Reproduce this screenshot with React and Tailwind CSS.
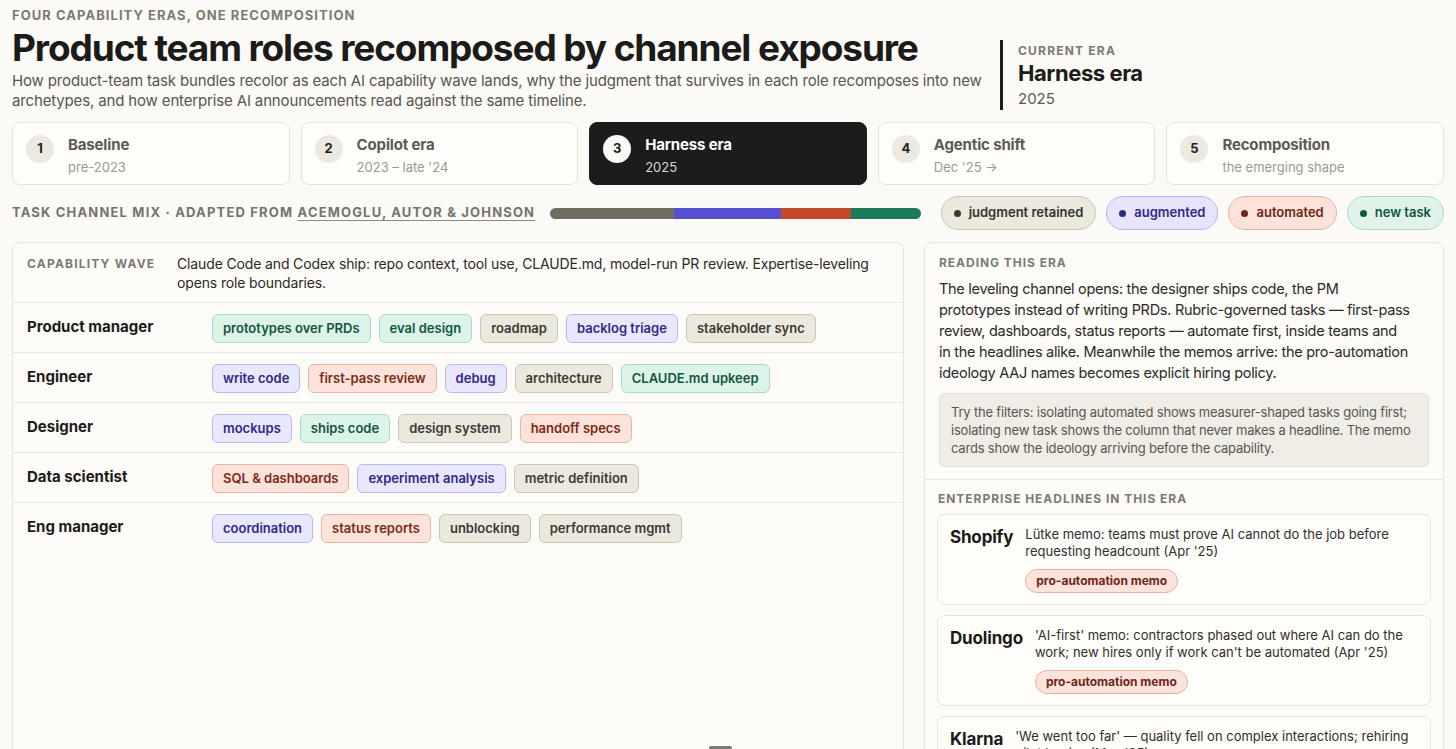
import React from "react";

const CHIP = {
  n: "bg-[#dcf3e9] border-[#a9dcc4] text-[#14563b]",
  a: "bg-[#e9e7fc] border-[#bab6f0] text-[#2d2a86]",
  x: "bg-[#fbe3db] border-[#ebb4a5] text-[#7a2a18]",
  r: "bg-[#ebe8de] border-[#cac6ba] text-[#3b3a35]",
};

const ROLES = [
  ["Product manager", [["prototypes over PRDs", "n"], ["eval design", "n"], ["roadmap", "r"], ["backlog triage", "a"], ["stakeholder sync", "r"]]],
  ["Engineer", [["write code", "a"], ["first-pass review", "x"], ["debug", "a"], ["architecture", "r"], ["CLAUDE.md upkeep", "n"]]],
  ["Designer", [["mockups", "a"], ["ships code", "n"], ["design system", "r"], ["handoff specs", "x"]]],
  ["Data scientist", [["SQL & dashboards", "x"], ["experiment analysis", "a"], ["metric definition", "r"]]],
  ["Eng manager", [["coordination", "a"], ["status reports", "x"], ["unblocking", "r"], ["performance mgmt", "r"]]],
];

const ERAS = [
  ["1", "Baseline", "pre-2023", false],
  ["2", "Copilot era", "2023 – late '24", false],
  ["3", "Harness era", "2025", true],
  ["4", "Agentic shift", "Dec '25 →", false],
  ["5", "Recomposition", "the emerging shape", false],
];

const LEGEND = [
  ["judgment retained", "bg-[#ebe8de] border-[#c9c5b9] text-[#33322d]", "bg-[#3a3934]"],
  ["augmented", "bg-[#e7e5fb] border-[#b9b5ef] text-[#2d2a86]", "bg-[#2d2a86]"],
  ["automated", "bg-[#fbe3dc] border-[#eab2a3] text-[#6e2616]", "bg-[#6e2616]"],
  ["new task", "bg-[#dff3ea] border-[#aadcc5] text-[#10573a]", "bg-[#10573a]"],
];

const HEADLINES = [
  ["Shopify", "Lütke memo: teams must prove AI cannot do the job before requesting headcount (Apr '25)", true],
  ["Duolingo", "'AI-first' memo: contractors phased out where AI can do the work; new hires only if work can't be automated (Apr '25)", true],
  ["Klarna", "'We went too far' — quality fell on complex interactions; rehiring pilot begins (May '25)", false],
];

export default function App() {
  return (
    <div
      className="min-h-screen bg-[#fcfaf6] text-[#1b1b1a] px-3 pt-[7px] overflow-hidden"
      style={{ fontFamily: "Inter, 'Noto Sans', 'Liberation Sans', sans-serif", height: 749 }}
    >
      {/* Header */}
      <div className="flex">
        <div className="w-[975px] shrink-0">
          <div className="text-[13px] leading-[16px] font-bold tracking-[0.08em] text-[#7b7b74]">
            FOUR CAPABILITY ERAS, ONE RECOMPOSITION
          </div>
          <h1 className="mt-[3px] whitespace-nowrap text-[37px] leading-[44px] font-bold tracking-[-0.03em] text-[#1b1b1a]">
            Product team roles recomposed by channel exposure
          </h1>
          <p className="mt-[1px] text-[15px] leading-[20px] text-[#56564f] w-[982px] tracking-[-0.01em]">
            How product-team task bundles recolor as each AI capability wave lands, why the judgment that survives in each role recomposes into new archetypes, and how enterprise AI announcements read against the same timeline.
          </p>
        </div>
        <div className="ml-[13px] mt-[33px] self-start border-l-[3px] border-[#1b1b1a] pl-[15px] pt-[3px] h-[70px]">
          <div className="text-[12px] leading-[16px] font-bold tracking-[0.1em] text-[#7b7b74]">CURRENT ERA</div>
          <div className="text-[22px] leading-[28px] font-bold tracking-[-0.02em]">Harness era</div>
          <div className="mt-[2px] text-[15px] leading-[20px] text-[#5b5b55]">2025</div>
        </div>
      </div>

      {/* Era tabs */}
      <div className="mt-[11px] grid grid-cols-5 gap-[11px]">
        {ERAS.map(([n, t, s, active]) => (
          <div
            key={n}
            className={
              "h-[63px] rounded-[8px] border flex items-start gap-[14px] pl-[13px] pt-[12px] " +
              (active ? "bg-[#1b1c1b] border-[#1b1c1b]" : "bg-[#fefdfa] border-[#e6e3db]")
            }
          >
            <div
              className={
                "w-[28px] h-[28px] rounded-full flex items-center justify-center text-[13px] font-bold " +
                (active ? "bg-[#fbf9f4] text-[#1b1b1a]" : "bg-[#ece9e1] text-[#222]")
              }
            >
              {n}
            </div>
            <div>
              <div className={"text-[15px] leading-[20px] font-bold tracking-[-0.01em] " + (active ? "text-white" : "text-[#5b5b56]")}>{t}</div>
              <div className={"mt-[3px] text-[13px] leading-[18px] " + (active ? "text-[#d6d6d2]" : "text-[#9b9a93]")}>{s}</div>
            </div>
          </div>
        ))}
      </div>

      {/* Channel mix */}
      <div className="mt-[11px] flex items-center h-[34px]">
        <div className="text-[13px] font-bold tracking-[0.09em] text-[#74746d] whitespace-nowrap">
          TASK CHANNEL MIX · ADAPTED FROM{" "}
          <span className="underline decoration-[#8a8a84] underline-offset-[3px]">ACEMOGLU, AUTOR &amp; JOHNSON</span>
        </div>
        <div className="ml-auto flex h-[11px] w-[371px] rounded-full overflow-hidden">
          <div className="w-[124px] bg-[#6f6c62]" />
          <div className="w-[107px] bg-[#5550d1]" />
          <div className="w-[70px] bg-[#c24a28]" />
          <div className="w-[70px] bg-[#1a7a5a]" />
        </div>
        <div className="ml-[20px] flex gap-[10px]">
          {LEGEND.map(([t, c, d]) => (
            <div key={t} className={"h-[34px] rounded-full border flex items-center gap-[8px] px-[12px] text-[13px] font-semibold " + c}>
              <span className={"w-[7px] h-[7px] rounded-full " + d} />
              {t}
            </div>
          ))}
        </div>
      </div>

      {/* Main */}
      <div className="mt-[12px] flex gap-[20px]">
        <div className="w-[892px] h-[560px] rounded-[8px] border border-[#e8e4dc] bg-[#fdfbf7]">
          <div className="flex pt-[11px] pb-[10px] pl-[14px] pr-[14px] border-b border-[#ebe7df]">
            <div className="w-[150px] shrink-0 pt-[2px] text-[12px] leading-[16px] font-bold tracking-[0.1em] text-[#7b7b74]">CAPABILITY WAVE</div>
            <div className="text-[14px] leading-[19px] text-[#2a2a28] w-[712px] tracking-[-0.01em]">
              Claude Code and Codex ship: repo context, tool use, CLAUDE.md, model-run PR review. Expertise-leveling opens role boundaries.
            </div>
          </div>
          {ROLES.map(([role, chips], i) => (
            <div key={role} className={"flex pl-[14px] pt-[11px] pb-[9px] " + (i < 4 ? "border-b border-[#ebe7df]" : "")}>
              <div className="w-[185px] shrink-0 pt-[3px] text-[15px] leading-[20px] font-bold text-[#1b1b1a]">{role}</div>
              <div className="flex flex-wrap gap-[8px]">
                {chips.map(([c, k]) => (
                  <span key={c} className={"h-[29px] px-[10px] rounded-[6px] border flex items-center text-[13px] font-semibold " + CHIP[k]}>
                    {c}
                  </span>
                ))}
              </div>
            </div>
          ))}
          <div className="mt-[194px] ml-[696px] w-[23px] h-[6px] rounded-t-[2px] bg-[#7a7973]" />
        </div>

        <div className="w-[522px] h-[560px] rounded-[8px] border border-[#e8e4dc] bg-[#fdfbf7]">
          <div className="px-[14px] pt-[12px] pb-[12px] border-b border-[#ebe7df]">
            <div className="text-[12px] leading-[16px] font-bold tracking-[0.08em] text-[#7b7b74]">READING THIS ERA</div>
            <p className="mt-[7px] w-[472px] text-[14.5px] leading-[21px] tracking-[-0.02em] text-[#2a2a28]">
              The leveling channel opens: the designer ships code, the PM prototypes instead of writing PRDs. Rubric-governed tasks — <span className="whitespace-nowrap">first-pass</span> review, dashboards, status reports — automate first, inside teams and in the headlines alike. Meanwhile the memos arrive: the <span className="whitespace-nowrap">pro-automation</span> ideology AAJ names becomes explicit hiring policy.
            </p>
            <div className="mt-[10px] rounded-[6px] border border-[#e2dfd5] bg-[#efede6] px-[11px] py-[9px] text-[13px] leading-[18px] tracking-[-0.015em] text-[#57574f]">
              Try the filters: isolating automated shows measurer-shaped tasks going first; isolating new task shows the column that never makes a headline. The memo cards show the ideology arriving before the capability.
            </div>
          </div>
          <div className="px-[12px] pt-[11px]">
            <div className="pl-[1px] text-[12px] leading-[16px] font-bold tracking-[0.08em] text-[#7b7b74]">ENTERPRISE HEADLINES IN THIS ERA</div>
            <div className="mt-[7px] flex flex-col gap-[10px]">
              {HEADLINES.map(([name, text, memo]) => (
                <div key={name} className="rounded-[8px] border border-[#e8e4dc] bg-[#fefdfa] pl-[12px] pr-[14px] pt-[11px] pb-[11px] flex gap-[12px] items-start">
                  <div className="text-[17px] leading-[20px] font-bold tracking-[-0.01em] text-[#1b1b1a] pt-[1px]">{name}</div>
                  <div>
                    <div className="text-[13px] leading-[17px] text-[#2f2f2c]">{text}</div>
                    {memo && (
                      <span className="mt-[9px] inline-flex h-[24px] items-center rounded-full border border-[#eab2a3] bg-[#fbe3dc] px-[10px] text-[12px] font-bold text-[#6e2616]">
                        pro-automation memo
                      </span>
                    )}
                  </div>
                </div>
              ))}
            </div>
          </div>
        </div>
      </div>
    </div>
  );
}
